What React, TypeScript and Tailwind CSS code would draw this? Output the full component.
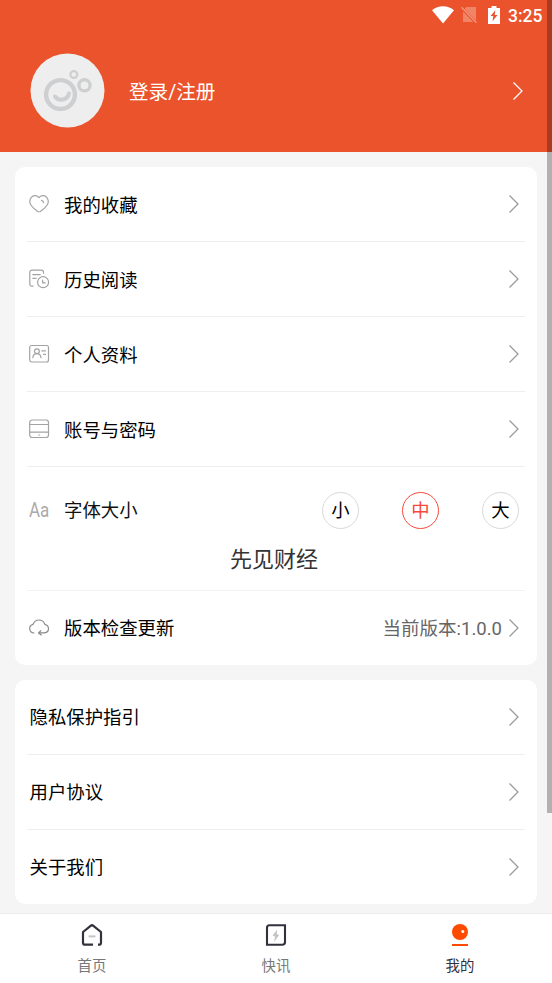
import React from 'react';

const Arrow = ({ className = 'text-[#999]' }: { className?: string }) => (
  <svg width="12" height="20" viewBox="0 0 12 20" fill="none" stroke="currentColor" strokeWidth="1.25" className={className}>
    <path d="M1.5 1.5 10 10l-8.5 8.5" />
  </svg>
);

const iconProps = {
  width: 22,
  height: 22,
  viewBox: '0 0 22 22',
  fill: 'none',
  stroke: '#a3a3a3',
  strokeWidth: 1.2,
  strokeLinecap: 'round' as const,
  strokeLinejoin: 'round' as const,
};

const HeartIcon = () => (
  <svg {...iconProps}>
    <path d="M11 3.6C9.2 1.3 6 1 4 2.7 1.3 4.8 1.2 8.5 2.9 11c1.5 2.3 4.1 4.6 6.9 6.4.9.5 1.6.5 2.5 0 2.8-1.8 5.4-4.1 6.9-6.4 1.7-2.5 1.5-6.2-1.2-8.3-2-1.7-5.2-1.4-7 .9Z" />
    <path d="M13.5 6.4c1.2.2 2 1.1 2 2.3" />
  </svg>
);

const HistoryIcon = () => (
  <svg {...iconProps}>
    <path d="M5 17.2H3.9c-1.2 0-2.1-.8-2.1-2V3.3c0-1.2.9-2.1 2.1-2.1h9.5c1.2 0 2.1.9 2.1 2.1v.9M4.8 5.6h7.5M4.8 9.3h3.4" />
    <circle cx="15.1" cy="13.2" r="5.5" />
    <path d="M14.6 11v2.8h2.6" />
  </svg>
);

const ProfileIcon = () => (
  <svg {...iconProps}>
    <rect x="1.7" y="1.5" width="18.8" height="16.5" rx="2" />
    <circle cx="8.9" cy="7.2" r="2.4" />
    <path d="M4.8 13.6c.4-2.4 1.6-3.9 4.1-3.9s3.7 1.5 4.1 3.9M13.8 6.8h3.7M15.5 10.4h2" />
  </svg>
);

const AccountIcon = () => (
  <svg {...iconProps}>
    <rect x="1.7" y="1" width="18.8" height="17.5" rx="2.5" />
    <path d="M1.7 5.5h18.8M1.7 13.2h18.8M10.8 16h.8" />
  </svg>
);

const CloudIcon = () => (
  <svg {...iconProps} stroke="#8b8b8b">
    <path d="M6 15c-2.5 0-4.3-1.9-4.3-4.4 0-2.2 1.4-3.8 3.4-4.3.9-2.6 3.1-4.3 5.9-4.3 2.9 0 5 1.7 5.8 4.3 2.2.5 3.7 2.2 3.7 4.4 0 2.5-1.9 4.2-4.8 4.2h-4.9M12.8 12.8l-2.3 2.2 2.8 2" />
  </svg>
);

const StatusBar = () => (
  <div className="flex h-[30px] items-center pl-[432px]">
    <svg width="22" height="18" viewBox="0 0 22 18" fill="#fff">
      <path d="M0 4.2C6.2-1.1 15.8-1.1 22 4.2L11 17.5Z" />
    </svg>
    <svg className="ml-[7px]" width="17" height="18" viewBox="0 0 17 18">
      <path d="M5.5 1H15v15H2V4.5Z" fill="#f08467" />
      <path d="M.5 2 16 17.5" stroke="#ea532b" strokeWidth="3" />
      <path d="M.5 1.3 15.5 16.7" stroke="#f3967d" strokeWidth="1.3" />
    </svg>
    <svg className="mb-px ml-[10px]" width="12" height="18" viewBox="0 0 12 18">
      <path d="M3.5 0h5v2H12v16H0V2h3.5Z" fill="#fff" />
      <path d="M7.4 4.3 2.5 10h2.8l-.8 5.3L9.5 9H6.7Z" fill="#ea532b" />
    </svg>
    <span className="ml-[8px] pt-px text-[17.5px] leading-[30px] font-medium text-white">3:25</span>
  </div>
);

const Header = () => (
  <header className="h-[152px] bg-[#ea532b]">
    <StatusBar />
    <div className="flex h-[122px] items-center pr-[28px] pl-[30px]">
      <svg className="mb-px" width="75" height="75" viewBox="0 0 75 75" fill="none" stroke="#cecfd0">
        <circle cx="37.5" cy="37.5" r="37" fill="#eee" stroke="none" />
        <circle cx="30.5" cy="41.5" r="14.4" strokeWidth="4.4" />
        <path d="M25 43.5c3.5 5 12.3 4.2 14-3" strokeWidth="4" strokeLinecap="round" />
        <circle cx="54.5" cy="32.3" r="5.6" strokeWidth="3.4" />
        <circle cx="43.8" cy="21.5" r="3.4" strokeWidth="2.2" />
      </svg>
      <span className="ml-[24px] flex-1 pt-[3px] text-[19.6px] text-white">登录/注册</span>
      <Arrow className="text-white" />
    </div>
  </header>
);

type RowProps = {
  label: string;
  icon?: React.ReactNode;
  extra?: string;
  last?: boolean;
};

const Row = ({ label, icon, extra, last }: RowProps) => (
  <div className={`mx-3 flex h-[75px] items-center border-b pr-[5px] ${icon ? 'pl-px' : 'pl-[2.5px]'} ${last ? 'border-transparent' : 'border-[#eee]'}`}>
    {icon && <div className="mr-[14px] w-[22px] pt-[2px]">{icon}</div>}
    <span className={`flex-1 text-[18.4px] text-black ${icon && !extra ? 'pt-[3px]' : 'pt-[2px]'}`}>{label}</span>
    {extra && <span className="mr-[6px] pt-[3px] text-[18.5px] text-[#666]">{extra}</span>}
    <Arrow />
  </div>
);

const FontSize = () => (
  <div className="mx-3 h-[124px] border-b border-[#f3f3f3] pt-[24px]">
    <div className="flex h-[38px] items-center pr-[6px] pl-[2px]">
      <span className="w-[35px] origin-left scale-x-[.87] pt-[2px] text-[19.5px] text-[#aaa]">Aa</span>
      <span className="flex-1 pt-px text-[18.4px] text-[#111]">字体大小</span>
      <div className="flex gap-[43px] text-[18.4px] leading-none text-black">
        <div className="flex size-[37px] items-center justify-center rounded-full border border-[#d9d9d9] pt-[2px]">小</div>
        <div className="flex size-[37px] items-center justify-center rounded-full border border-[#f54a3b] pt-[2px] text-[#f54a3b]">中</div>
        <div className="flex size-[37px] items-center justify-center rounded-full border border-[#d9d9d9] pt-[2px]">大</div>
      </div>
    </div>
    <p className="mt-[14px] pr-[4px] text-center text-[22px] leading-[34px] text-[#333]">先见财经</p>
  </div>
);

const TabBar = () => (
  <nav className="grid h-[70px] grid-cols-3 border-t border-[#ececec] bg-white text-[14.4px] text-[#777]">
    <div className="flex flex-col items-center pt-[10px]">
      <svg width="24" height="24" viewBox="0 0 24 24" fill="none">
        <path d="M13 20.7H5c-1.2 0-2-.8-2-2V8L10.6 1.8c.9-.7 1.9-.7 2.8 0L21 8v10.7c0 1.2-.8 2-2 2h-1" stroke="#33323c" strokeWidth="2.2" strokeLinejoin="round" />
        <path d="M8.5 12.4h7" stroke="#c5c5c8" strokeWidth="2" />
      </svg>
      <span className="mt-[8px] leading-[22px]">首页</span>
    </div>
    <div className="flex flex-col items-center pt-[10px]">
      <svg width="24" height="24" viewBox="0 0 24 24" fill="none">
        <path d="M5.5 1.2H21V18c0 1.7-1 2.7-2.7 2.7H3V3.7c0-1.5 1-2.5 2.5-2.5Z" stroke="#33323c" strokeWidth="2.1" />
        <path d="M13.2 5.5 8.5 11.6l2.5.8-1 5.6 5.2-7-2.5-1Z" fill="#c5c5c8" />
      </svg>
      <span className="mt-[8px] leading-[22px]">快讯</span>
    </div>
    <div className="flex flex-col items-center pt-[10px]">
      <svg width="24" height="24" viewBox="0 0 24 24">
        <circle cx="12" cy="8" r="8" fill="#ff4b00" />
        <circle cx="14.8" cy="7.6" r="1.5" fill="#fff" />
        <path d="M4 20h16v2H4z" fill="#ff4b00" />
      </svg>
      <span className="mt-[8px] leading-[22px] text-[#33323c]">我的</span>
    </div>
  </nav>
);

export default function App() {
  return (
    <div className="relative flex h-[983px] w-[552px] flex-col overflow-hidden bg-[#f5f5f5] font-[Roboto,'Noto_Sans_CJK_SC',sans-serif]">
      <Header />
      <main className="flex-1 px-[15px] pt-[15px]">
        <section className="h-[498px] rounded-[10px] bg-white">
          <Row label="我的收藏" icon={<HeartIcon />} />
          <Row label="历史阅读" icon={<HistoryIcon />} />
          <Row label="个人资料" icon={<ProfileIcon />} />
          <Row label="账号与密码" icon={<AccountIcon />} />
          <FontSize />
          <Row label="版本检查更新" icon={<CloudIcon />} extra="当前版本:1.0.0" last />
        </section>
        <section className="mt-[15px] h-[224px] rounded-[10px] bg-white">
          <Row label="隐私保护指引" />
          <Row label="用户协议" />
          <Row label="关于我们" last />
        </section>
      </main>
      <TabBar />
      {/* scroll indicator floats above the content */}
      <div className="absolute top-0 right-0 h-[813px] w-[5px] bg-black/28" />
    </div>
  );
}
